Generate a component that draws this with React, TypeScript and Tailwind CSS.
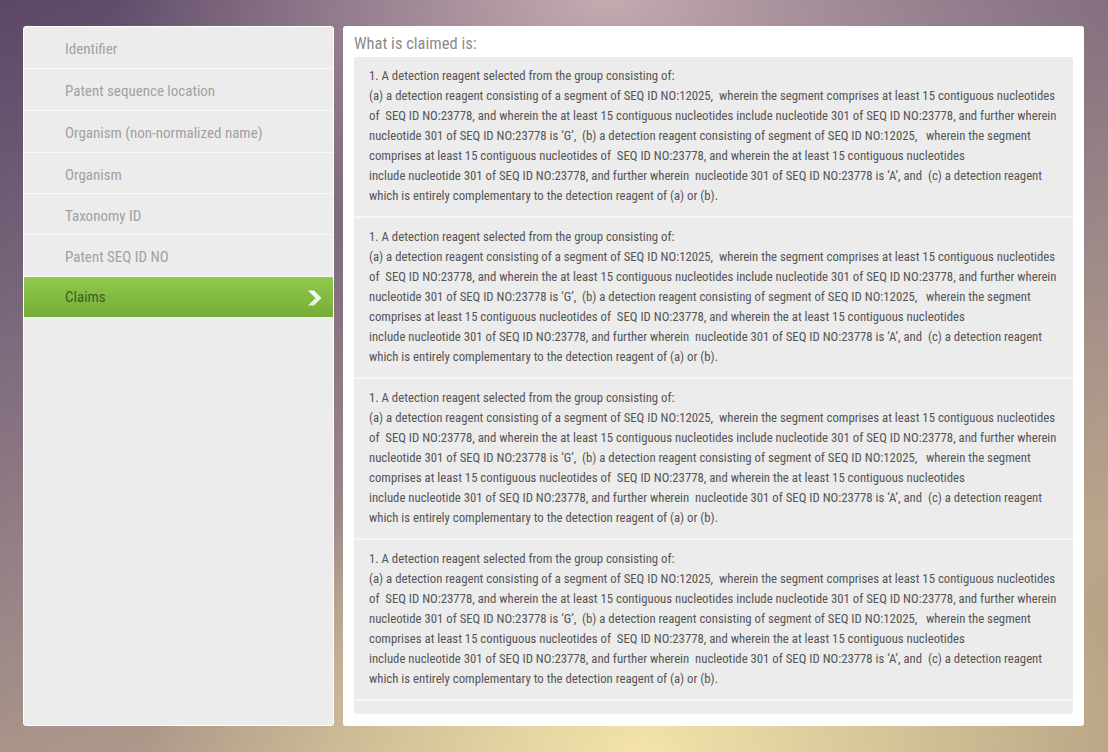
import React from "react";

const menu = [
  { label: "Identifier", h: "h-[42px]" },
  { label: "Patent sequence location", h: "h-[42px]" },
  { label: "Organism (non-normalized name)", h: "h-[42px]" },
  { label: "Organism", h: "h-[41px]" },
  { label: "Taxonomy ID", h: "h-[41px]" },
  { label: "Patent SEQ ID NO", h: "h-[42px]" },
];

const claimLines = [
  "1. A detection reagent selected from the group consisting of:",
  "(a) a detection reagent consisting of a segment of SEQ ID NO:12025,  wherein the segment comprises at least 15 contiguous nucleotides",
  "of  SEQ ID NO:23778, and wherein the at least 15 contiguous nucleotides include nucleotide 301 of SEQ ID NO:23778, and further wherein",
  "nucleotide 301 of SEQ ID NO:23778 is \u2018G\u2019,  (b) a detection reagent consisting of segment of SEQ ID NO:12025,   wherein the segment",
  "comprises at least 15 contiguous nucleotides of  SEQ ID NO:23778, and wherein the at least 15 contiguous nucleotides",
  "include nucleotide 301 of SEQ ID NO:23778, and further wherein  nucleotide 301 of SEQ ID NO:23778 is \u2018A\u2019, and  (c) a detection reagent",
  "which is entirely complementary to the detection reagent of (a) or (b).",
];

function Chevron() {
  return (
    <svg width="16" height="16" viewBox="0 0 16 16">
      <defs>
        <linearGradient id="chev" x1="0" y1="0" x2="0" y2="1">
          <stop offset="0" stopColor="#ffffff" />
          <stop offset="1" stopColor="#e2f0cc" />
        </linearGradient>
      </defs>
      <polygon points="1,0.5 7,0.5 14.5,8 7,15.5 1,15.5 8.5,8" fill="url(#chev)" />
    </svg>
  );
}

export default function App() {
  return (
    <div className="h-screen w-full flex gap-[9px] pl-[23px] pr-[24px] pt-[26px] pb-[26px] font-['Roboto_Condensed','Liberation_Sans',sans-serif] bg-[radial-gradient(ellipse_45%_35%_at_55%_0%,#c3abb0_0%,transparent_100%),radial-gradient(ellipse_45%_40%_at_58%_100%,#f4e3aa_0%,transparent_100%),linear-gradient(160deg,#5c4767_0%,#7d6a7d_30%,#9c8888_55%,#b9a58a_80%,#b7a284_100%)]">
      {/* left menu */}
      <div className="w-[311px] shrink-0 bg-[#ececec] border border-white rounded-[3px] flex flex-col">
        {menu.map((m) => (
          <div
            key={m.label}
            className={`${m.h} shrink-0 flex items-center pl-[41px] pt-[4px] border-b-[1.5px] border-[#f8f8f8] text-[15px] text-[#a0a2a3]`}
          >
            {m.label}
          </div>
        ))}
        <div className="h-[40px] shrink-0 flex items-center justify-between pl-[41px] pr-[10px] pt-[1px] bg-[linear-gradient(to_bottom,#90c94c,#76ad38)] text-[15px] text-[#3d5c1b]">
          <span>Claims</span>
          <Chevron />
        </div>
      </div>

      {/* right panel */}
      <div className="flex-1 min-w-0 bg-white rounded-[3px] flex flex-col px-[11px] pb-[12px]">
        <div className="h-[31px] pt-[8px] text-[16.5px] leading-[20px] text-[#8b8b8b]">What is claimed is:</div>
        <div className="flex-1 bg-[#ececec] rounded-[3px] flex flex-col overflow-hidden">
          {[0, 1, 2, 3].map((i) => (
            <div key={i} className="pl-[15px] pt-[9px] pb-[10px] border-b-2 border-[#f7f7f7] text-[12.75px] leading-[20px] text-[#555555]">
              {claimLines.map((l, j) => (
                <div key={j} className="whitespace-pre">
                  {l}
                </div>
              ))}
            </div>
          ))}
        </div>
      </div>
    </div>
  );
}
